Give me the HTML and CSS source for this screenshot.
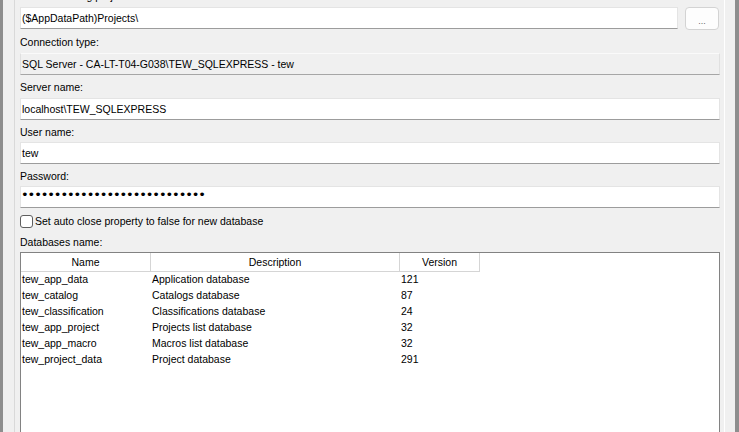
FILE: index.html
```html
<!DOCTYPE html>
<html lang="en">
<head>
  <meta charset="UTF-8" />
  <title>Database connection</title>
  <link rel="stylesheet" href="styles.css">
</head>
<body>
  <div class="frame">
    <div class="panel">
      <div class="field first">
        <label class="caption">Default working projects folder:</label>
        <div class="path-row">
          <div class="textbox">($AppDataPath)Projects\</div>
          <button class="browse">...</button>
        </div>
      </div>

      <div class="field">
        <label class="caption">Connection type:</label>
        <div class="textbox readonly">SQL Server - CA-LT-T04-G038\TEW_SQLEXPRESS - tew</div>
      </div>

      <div class="field">
        <label class="caption">Server name:</label>
        <div class="textbox">localhost\TEW_SQLEXPRESS</div>
      </div>

      <div class="field compact">
        <label class="caption">User name:</label>
        <div class="textbox">tew</div>
      </div>

      <div class="field compact">
        <label class="caption">Password:</label>
        <div class="textbox password">••••••••••••••••••••••••••••</div>
      </div>

      <label class="check-row">
        <span class="checkbox"></span>
        Set auto close property to false for new database
      </label>

      <div class="caption list-caption">Databases name:</div>

      <div class="listview">
        <div class="list-header">
          <div class="col">Name</div>
          <div class="col">Description</div>
          <div class="col">Version</div>
        </div>
        <div class="list-row"><span>tew_app_data</span><span>Application database</span><span>121</span></div>
        <div class="list-row"><span>tew_catalog</span><span>Catalogs database</span><span>87</span></div>
        <div class="list-row"><span>tew_classification</span><span>Classifications database</span><span>24</span></div>
        <div class="list-row"><span>tew_app_project</span><span>Projects list database</span><span>32</span></div>
        <div class="list-row"><span>tew_app_macro</span><span>Macros list database</span><span>32</span></div>
        <div class="list-row"><span>tew_project_data</span><span>Project database</span><span>291</span></div>
      </div>
    </div>
  </div>
</body>
</html>
```

FILE: styles.css
```css
html, body {
  margin: 0;
  padding: 0;
  height: 100%;
  overflow: hidden;
}

body {
  font-family: 'Liberation Sans', Arial, sans-serif;
  font-size: 10.5px;
  color: #000;
  background-color: #f0f0f0;
}

.frame {
  height: 432px;
  display: flex;
  border-left: 3px solid #8e8e8e;
  border-right: 4px solid #8e8e8e;
  padding: 0 10px 0 11px;
  box-sizing: border-box;
}

.panel {
  flex: 1;
  display: flex;
  flex-direction: column;
  border-left: 1px solid #d9d9d9;
  border-right: 1px solid #ffffff;
  padding: 0 4px 0 5px;
  overflow: hidden;
}

.caption {
  display: block;
  height: 23px;
  line-height: 13px;
  padding-top: 6px;
  box-sizing: border-box;
}

.field.first {
  margin-top: -16px;
}

.field.compact .caption {
  height: 22px;
}

.textbox {
  height: 22px;
  box-sizing: border-box;
  background-color: #fff;
  border: 1px solid #e4e4e4;
  border-bottom-color: #9c9c9c;
  padding: 0 1px;
  line-height: 20px;
  white-space: nowrap;
}

.textbox.readonly {
  background-color: #f0f0f0;
  border-top-color: #fafafa;
  border-left-color: #e0e0e0;
  border-right-color: #e0e0e0;
  border-bottom-color: #a6a6a6;
}

.textbox.password {
  font-family: 'DejaVu Sans', sans-serif;
  font-size: 13px;
  letter-spacing: -1.1px;
  line-height: 16px;
  padding-left: 0;
  overflow: hidden;
}

.path-row {
  display: flex;
  gap: 7px;
  align-items: flex-start;
}

.path-row .textbox {
  flex: 1;
}

.browse {
  width: 34px;
  height: 23px;
  margin-right: 1px;
  background-color: #fdfdfd;
  border: 1px solid #d3d3d3;
  border-radius: 4px;
  color: #6a6a6a;
  font-family: 'Liberation Sans', Arial, sans-serif;
  font-size: 9px;
  padding: 5px 0 0;
}

.check-row {
  display: flex;
  align-items: center;
  gap: 2px;
  height: 25px;
  padding-top: 1px;
  box-sizing: border-box;
}

.checkbox {
  width: 13px;
  height: 13px;
  box-sizing: border-box;
  border: 1px solid #5f5f5f;
  border-radius: 3px;
  background-color: #fff;
}

.list-caption {
  height: 19px;
  padding-top: 3px;
}

.listview {
  flex: 1;
  background-color: #fff;
  border: 1px solid #828282;
  border-bottom: none;
}

.list-header {
  display: grid;
  grid-template-columns: 130px 249px 80px;
  height: 19px;
}

.list-header .col {
  text-align: center;
  height: 19px;
  line-height: 18px;
  box-sizing: border-box;
  border-right: 1px solid #d5d5d5;
  border-bottom: 1px solid #d5d5d5;
}

.list-row {
  display: grid;
  grid-template-columns: 130px 249px 80px;
  height: 16px;
  line-height: 15px;
}

.list-row span {
  padding-left: 1px;
  white-space: nowrap;
}
```
